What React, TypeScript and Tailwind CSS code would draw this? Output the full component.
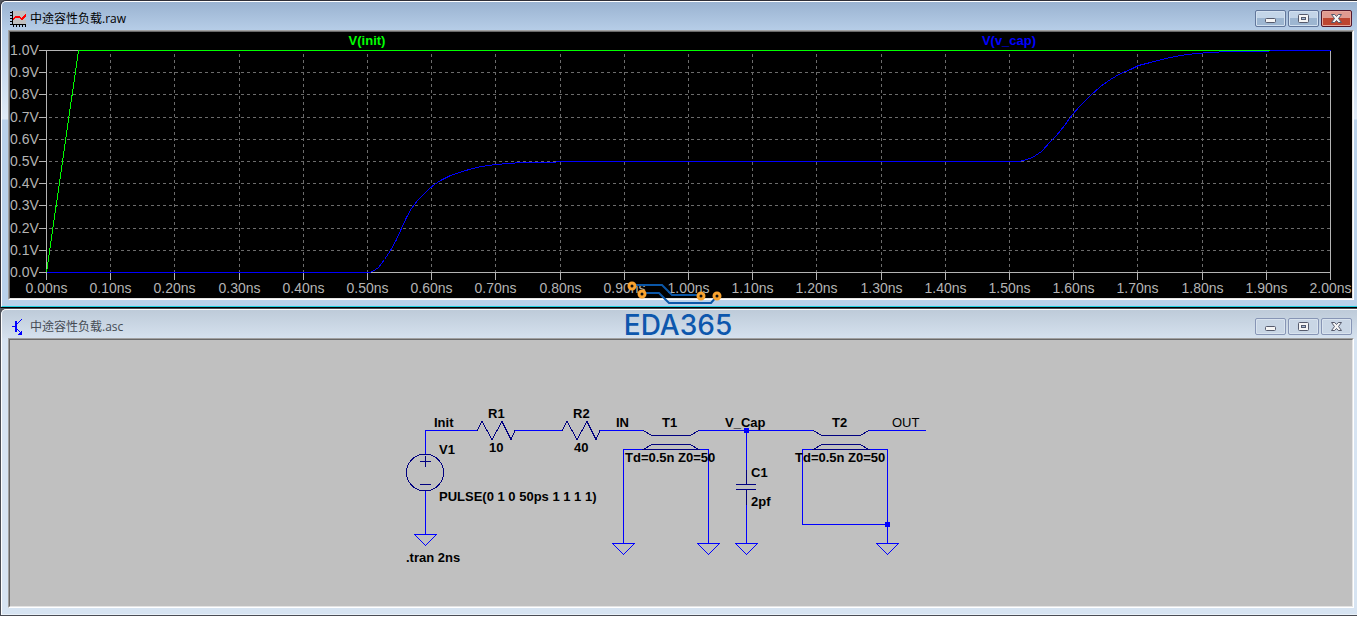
import type { ReactNode } from 'react';
import { clsx } from 'clsx';

type Point = [number, number];

const PLOT = { left: 36, top: 18, right: 1320, bottom: 240 };

const timeTicks = Array.from({ length: 21 }, (_, i) => ({
  label: `${(i / 10).toFixed(2)}ns`,
  x: PLOT.left + Math.round((i * (PLOT.right - PLOT.left)) / 20) + 0.5,
}));

const voltTicks = Array.from({ length: 11 }, (_, i) => ({
  label: `${(1 - i / 10).toFixed(1)}V`,
  y: PLOT.top + Math.round((i * (PLOT.bottom - PLOT.top)) / 10) + 0.5,
}));

const initTrace: Point[] = [[36, 240], [68, 18], [1259, 18]];

const capTrace: Point[] = [
  [36, 240], [359, 240], [362, 239], [365, 237], [368, 235], [374, 227], [380, 218], [386, 207],
  [391, 196], [396, 185], [401, 176], [407, 168], [412, 163], [418, 157], [424, 152],
  [430, 148], [440, 143], [452, 139], [462, 136], [471, 134], [485, 132], [498, 131],
  [511, 130], [545, 130], [546, 129], [1008, 129], [1013, 128], [1022, 125], [1031, 119],
  [1040, 109], [1046, 103], [1054, 93], [1062, 82], [1070, 73], [1080, 63], [1090, 54],
  [1100, 47], [1110, 41], [1120, 37], [1128, 33], [1140, 30], [1155, 26], [1170, 23],
  [1185, 21], [1200, 20], [1218, 19], [1258, 19], [1259, 18], [1320, 18],
];

const toPoints = (trace: Point[]) => trace.map(([x, y]) => `${x + 0.5},${y + 0.5}`).join(' ');

function RawIcon() {
  return (
    <svg width="16" height="16" viewBox="0 0 16 16" shapeRendering="crispEdges" aria-hidden="true">
      <rect x="3" width="13" height="13" fill="#c0c0c0" />
      <path d="M2.5 0v14M2 13.5h14M0 1.5h2M0 4.5h2M0 7.5h2M0 10.5h2M0 13.5h2M3.5 14v2M6.5 14v2M9.5 14v2M12.5 14v2M15.5 14v2" stroke="#000" fill="none" />
      <path d="M3 8.5L6 5.5h3L11 7.5h2L16 3.5" stroke="#f00" strokeWidth="2" fill="none" />
    </svg>
  );
}

function AscIcon() {
  return (
    <svg width="16" height="16" viewBox="0 0 16 16" shapeRendering="crispEdges" aria-hidden="true">
      <path d="M2 7.5h3M6.5 9.5L12 15M6.5 5.5L12 0" stroke="#00f" fill="none" />
      <path d="M6 2v11" stroke="#00f" strokeWidth="2" />
      <path d="M12 11v5H8v-1z" fill="#00f" />
    </svg>
  );
}

function CaptionIcon({ kind }: { kind: 'min' | 'max' | 'close' }) {
  return (
    <svg width="13" height="11" viewBox="0 0 13 11" aria-hidden="true">
      {kind === 'min' && <rect x="1.5" y="5.5" width="10" height="4" rx="1" fill="#f5f5f5" stroke="#555a6c" />}
      {kind === 'max' && (
        <>
          <rect x="1.5" y="1.5" width="10" height="8" rx="1" fill="#f5f5f5" stroke="#555a6c" />
          <rect x="4.5" y="4.5" width="4" height="2" fill="#a7bdd8" stroke="#555a6c" />
        </>
      )}
      {kind === 'close' && (
        <path
          d="M1.5 1.5h3.2l1.8 2 1.8-2h3.2L8.5 5.5l3 4H8.3l-1.8-2-1.8 2H1.5l3-4z"
          fill="#f5f5f5"
          stroke="#555a6c"
          strokeLinejoin="round"
        />
      )}
    </svg>
  );
}

function CaptionButtons({ active }: { active: boolean }) {
  const base = 'flex h-[17px] w-[31px] items-center justify-center rounded-[2px] border';
  const plain = active
    ? 'border-[#62779b] bg-linear-to-b from-[#c3d5e8] from-50% to-[#9db6d1] to-50% shadow-[inset_0_0_0_1px_#d3e1f0]'
    : 'border-[#8795b5] bg-[#c9d6e5] shadow-[inset_0_0_0_1px_#d9e3ee]';
  const close = active
    ? 'border-[#52162a] bg-linear-to-b from-[#e09a90] from-50% to-[#bd4530] to-50% shadow-[inset_0_0_0_1px_#e6a79c]'
    : plain;

  return (
    <div className="flex gap-[2px]">
      <button type="button" aria-label="Minimize" className={clsx(base, plain)}>
        <CaptionIcon kind="min" />
      </button>
      <button type="button" aria-label="Maximize" className={clsx(base, plain)}>
        <CaptionIcon kind="max" />
      </button>
      <button type="button" aria-label="Close" className={clsx(base, close)}>
        <CaptionIcon kind="close" />
      </button>
    </div>
  );
}

interface ChildWindowProps {
  title: string;
  icon: ReactNode;
  active?: boolean;
  children: ReactNode;
}

function ChildWindow({ title, icon, active = false, children }: ChildWindowProps) {
  return (
    <section
      className={clsx(
        'overflow-hidden rounded-tl-[6px] border-y border-l',
        active
          ? 'border-t-[#2f2f38] border-b-black border-l-[#2f2f38] bg-[linear-gradient(#99b2d0_0px,#b6cde7_29px,#dfeaf6_118px,#b9d1ea_119px)]'
          : 'border-[#4a4d55] bg-[linear-gradient(#bdcad8_0px,#d5e1ee_29px,#d7e4f2_30px)]',
      )}
    >
      <div
        className={clsx(
          'rounded-tl-[5px] border-y border-l border-white pb-[6px] pl-[6px] pr-[3px]',
          active ? 'border-b-[#1fd0e2]' : 'border-b-[#e9f1f9]',
        )}
      >
        <header className="flex h-7 items-center justify-between pr-[2px] pt-1">
          <h2
            className={clsx(
              "flex items-center gap-1 pl-[2px] pt-[2px] font-['Open_Sans','Noto_Sans_CJK_SC',sans-serif] text-[12px] leading-4",
              active ? 'text-black' : 'text-[#454b54]',
            )}
          >
            {icon}
            {title}
          </h2>
          <CaptionButtons active={active} />
        </header>
        <div className="border border-b-white border-l-[#a0a0a0] border-r-white border-t-[#a0a0a0]">
          <div className="border border-b-[#e3e3e3] border-l-[#696969] border-r-[#e3e3e3] border-t-[#696969]">
            {children}
          </div>
        </div>
      </div>
    </section>
  );
}

function Waveforms() {
  return (
    <svg
      viewBox="0 0 1342 266"
      className="block h-auto w-full bg-black font-['Liberation_Sans',Arial,sans-serif] text-[14px]"
      role="img"
      aria-label="V(init), V(v_cap)"
    >
      <g shapeRendering="crispEdges" fill="none">
        <g stroke="#6c6c6c" strokeDasharray="3 3">
          {timeTicks.slice(1, -1).map((t) => (
            <path key={t.label} d={`M${t.x} 22V240`} />
          ))}
          {voltTicks.slice(1, -1).map((v) => (
            <path key={v.label} d={`M39 ${v.y}H1320`} />
          ))}
        </g>
        <g stroke="#b4b4b4">
          <path d="M36.5 18.5H1320.5V240.5H36.5z" />
          {timeTicks.map((t) => (
            <path key={t.label} d={`M${t.x} 240v8`} />
          ))}
          {voltTicks.map((v) => (
            <path key={v.label} d={`M29 ${v.y}h7`} />
          ))}
        </g>
        <polyline points={toPoints(capTrace)} stroke="#00f" />
        <polyline points={toPoints(initTrace)} stroke="#0f0" />
      </g>
      <g fill="#b4b4b4">
        {timeTicks.map((t) => (
          <text key={t.label} x={t.x} y="261" textAnchor="middle">{t.label}</text>
        ))}
        {voltTicks.map((v) => (
          <text key={v.label} x="0" y={v.y + 4.5}>{v.label}</text>
        ))}
      </g>
      <g className="text-[13px] font-bold" textAnchor="middle">
        <text x="357" y="13" fill="#0f0">V(init)</text>
        <text x="999" y="13" fill="#00f">V(v_cap)</text>
      </g>
    </svg>
  );
}

const grounds: Point[] = [[415, 194], [613, 203], [698, 203], [736, 203], [877, 203]];

const labels: { x: number; y: number; text: string }[] = [
  { x: 424, y: 87, text: 'Init' },
  { x: 478, y: 78, text: 'R1' },
  { x: 479, y: 112, text: '10' },
  { x: 563, y: 78, text: 'R2' },
  { x: 564, y: 112, text: '40' },
  { x: 606, y: 87, text: 'IN' },
  { x: 652, y: 87, text: 'T1' },
  { x: 715, y: 87, text: 'V_Cap' },
  { x: 822, y: 87, text: 'T2' },
  { x: 429, y: 114, text: 'V1' },
  { x: 429, y: 161, text: 'PULSE(0 1 0 50ps 1 1 1 1)' },
  { x: 396, y: 222, text: '.tran 2ns' },
  { x: 615, y: 122, text: 'Td=0.5n Z0=50' },
  { x: 785, y: 122, text: 'Td=0.5n Z0=50' },
  { x: 741, y: 137, text: 'C1' },
  { x: 741, y: 166, text: '2pf' },
];

function Schematic() {
  return (
    <svg
      viewBox="0 0 1342 266"
      className="block h-auto w-full bg-[#c0c0c0] font-['Liberation_Sans',Arial,sans-serif] text-[13px]"
      role="img"
      aria-label="Schematic"
    >
      <g shapeRendering="crispEdges" fill="none" stroke="#00f">
        {/* wires */}
        <path d="M415.5 114V90.5H468M505 90.5H553M590 90.5H634M689 90.5H803M859 90.5H916" />
        <path d="M415.5 150V194M613.5 203V109.5H698.5V203M736.5 90V135M736.5 155V203" />
        <path d="M877.5 203V109.5H792.5V184.5H877" />
        {grounds.map(([x, y]) => (
          <path key={x} d={`M${x - 10.5} ${y + 0.5}h22l-11 11z`} />
        ))}
        <rect x="734" y="88" width="5" height="5" fill="#00f" stroke="none" />
        <rect x="875" y="182" width="5" height="5" fill="#00f" stroke="none" />
      </g>
      <g shapeRendering="crispEdges" fill="none" stroke="#000080">
        {/* resistors */}
        {[467, 552].map((x) => (
          <path key={x} d={`M${x} 90.5l5-9 10 18 10-18 9 18 4-9`} />
        ))}
        {/* voltage source */}
        <circle cx="415" cy="132.5" r="18.5" />
        <path d="M410 121.5h11M415.5 116v11M410 144.5h11" />
        {/* transmission lines */}
        {[633, 803].map((x) => (
          <path key={x} d={`M${x} 90.5l9 5h38l9-5M${x} 109.5l9-5h38l9 5z`} />
        ))}
        {/* capacitor */}
        <path d="M726 144.5h20M726 149.5h20M736.5 130v14M736.5 150v15" />
      </g>
      <g className="font-bold">
        {labels.map((l) => (
          <text key={`${l.x}-${l.y}`} x={l.x} y={l.y}>{l.text}</text>
        ))}
      </g>
      <text x="882" y="87">OUT</text>
    </svg>
  );
}

function Watermark() {
  return (
    <svg
      width="112"
      height="70"
      viewBox="0 0 112 70"
      className="pointer-events-none absolute bottom-0 left-1/2 -translate-x-1/2 translate-y-9"
    >
      <g fill="none" stroke="#0b57a8" strokeWidth="2">
        <path d="M9 11H39L49 21H78" />
        <path d="M19 19H36L46 29H88L94 22" />
      </g>
      <g fill="#111" stroke="#f9a32f" strokeWidth="3">
        <circle cx="9" cy="12" r="3" />
        <circle cx="19" cy="20" r="3" />
        <circle cx="78" cy="22" r="3" />
        <circle cx="94" cy="22" r="3" />
      </g>
      <text x="55" y="61" textAnchor="middle" fill="#0d57ad" className="font-['Inter',sans-serif] text-[28px] font-medium">
        EDA365
      </text>
    </svg>
  );
}

export default function App() {
  return (
    <main className="bg-[#55585f]">
      <div className="relative">
        <ChildWindow title="中途容性负载.raw" icon={<RawIcon />} active>
          <Waveforms />
        </ChildWindow>
        <Watermark />
      </div>
      <ChildWindow title="中途容性负载.asc" icon={<AscIcon />}>
        <Schematic />
      </ChildWindow>
    </main>
  );
}
